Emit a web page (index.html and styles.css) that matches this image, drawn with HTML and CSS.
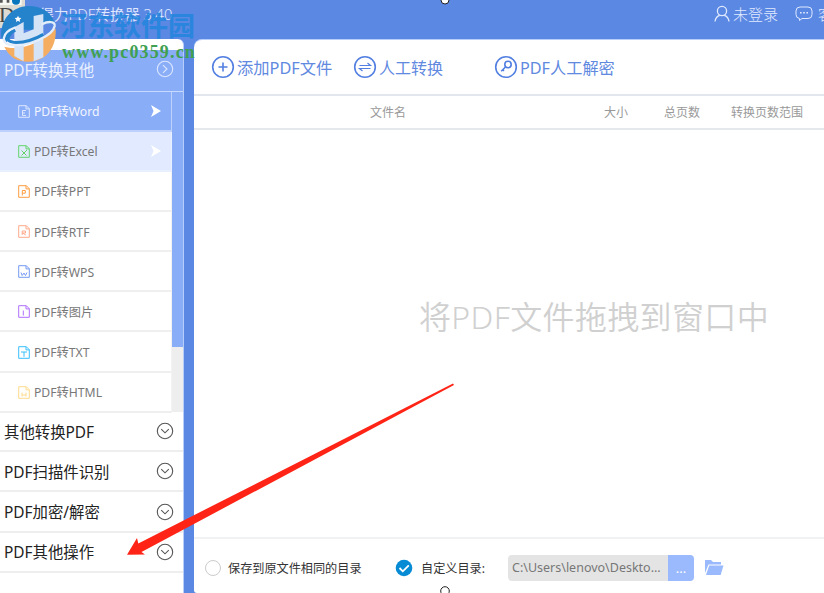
FILE: index.html
```html
<!DOCTYPE html>
<html lang="zh-CN">

	<head>
		<meta charset="UTF-8" />
		<meta name="viewport" content="width=device-width, initial-scale=1" />
		<title>得力PDF转换器 3.40</title>
		<link rel="stylesheet" href="styles.css">
	</head>
	<body>
		<!-- shared shapes -->
		<svg class="defs" width="0" height="0">
			<symbol id="down" viewBox="0 0 18 18">
				<circle cx="9" cy="9" r="7.7" />
				<path d="M5.2 7.2 9 10.8l3.8-3.6" />
			</symbol>
			<symbol id="file" viewBox="0 0 12 13">
				<path d="M.7.7h7.6l3 3v8.6H.7zM8 .7v3.2h3.3" />
			</symbol>
		</svg>
		<header class="titlebar">
			<h1 class="title">得力PDF转换器 3.40</h1>
			<div class="account">
				<svg class="icon-user" width="16" height="18" viewBox="0 0 16 18"><circle cx="8" cy="6" r="4.6" /><path d="M1 16.5c.5-3.8 2.5-5.6 4.8-6.2M15 16.5c-.5-3.8-2.5-5.6-4.8-6.2" /></svg>
				<span class="login">未登录</span>
				<svg class="icon-chat" width="18" height="16" viewBox="0 0 18 16"><path d="M5 1h8a4 4 0 0 1 4 4v3.5a4 4 0 0 1-4 4H7l-2.5 2v-2A4 4 0 0 1 1 8.5V5a4 4 0 0 1 4-4z" /><path class="dots" d="M5 6.8h1.6M8.2 6.8h1.6M11.4 6.8H13" /></svg>
				<span class="service">客</span>
			</div>
		</header>
		<div class="window">
			<aside class="sidebar">
				<div class="group group-open">
					<span>PDF转换其他</span>
					<svg class="arrow" width="18" height="18" viewBox="0 0 18 18"><circle cx="9" cy="9" r="7.7" /><path d="M7 5.2 11 9l-4 3.8" /></svg>
				</div>
				<div class="list">
					<ul class="items">
						<li class="item active"><svg class="file word" viewBox="0 0 12 13"><use href="#file" /><path d="M8 5.5H4.5v5H8M4.5 8H7" /></svg>PDF转Word<svg class="pointer" viewBox="0 0 10 12"><path d="M0 0 10 6 0 12 2.5 6z" /></svg></li>
						<li class="item hover"><svg class="file excel" viewBox="0 0 12 13"><use href="#file" /><path d="m3.5 5.5 5 5M9 5l-5.5 5.5" /></svg>PDF转Excel<svg class="pointer" viewBox="0 0 10 12"><path d="M0 0 10 6 0 12 2.5 6z" /></svg></li>
						<li class="item"><svg class="file ppt" viewBox="0 0 12 13"><use href="#file" /><path d="M4.3 10.5v-5h3v2.7h-3" /></svg>PDF转PPT</li>
						<li class="item"><svg class="file rtf" viewBox="0 0 12 13"><use href="#file" /><path d="M4.2 10V6h3.3v2H4.5l3.3 2" /></svg>PDF转RTF</li>
						<li class="item"><svg class="file wps" viewBox="0 0 12 13"><use href="#file" /><path d="m3 7.5 1.2 3L6 8l1.5 2.5L9 7.5" /></svg>PDF转WPS</li>
						<li class="item"><svg class="file image" viewBox="0 0 12 13"><use href="#file" /><path d="M5.3 5.5v5" /></svg>PDF转图片</li>
						<li class="item"><svg class="file txt" viewBox="0 0 12 13"><use href="#file" /><path d="M3 6h6M6 6v4.8" /></svg>PDF转TXT</li>
						<li class="item"><svg class="file html" viewBox="0 0 12 13"><use href="#file" /><path d="M4 6.5v4M8 6.5v4M4 9h4" /></svg>PDF转HTML</li>
					</ul>
					<div class="scroll"><div class="thumb"></div></div>
				</div>
				<div class="group"><span>其他转换PDF</span><svg class="arrow" width="18" height="18"><use href="#down" /></svg></div>
				<div class="group"><span>PDF扫描件识别</span><svg class="arrow" width="18" height="18"><use href="#down" /></svg></div>
				<div class="group"><span>PDF加密/解密</span><svg class="arrow" width="18" height="18"><use href="#down" /></svg></div>
				<div class="group"><span>PDF其他操作</span><svg class="arrow" width="18" height="18"><use href="#down" /></svg></div>
			</aside>
			<main class="main">
				<div class="toolbar">
					<button class="tool add"><svg width="24" height="24" viewBox="0 0 24 24"><circle cx="12" cy="12" r="10.3" /><path d="M12 7.5v9M7.5 12h9" /></svg>添加PDF文件</button>
					<button class="tool manual"><svg width="24" height="24" viewBox="0 0 24 24"><circle cx="12" cy="12" r="10.3" /><path class="thin" d="M6.5 10.5h11L14.5 8M17.5 13.5h-11l3 2.5" /></svg>人工转换</button>
					<button class="tool decrypt"><svg width="24" height="24" viewBox="0 0 24 24"><circle cx="12" cy="12" r="10.3" /><circle cx="14" cy="9.5" r="3.2" /><path d="m11.7 11.8-4.5 4.5M8.5 14.5l1.5 1.5" /></svg>PDF人工解密</button>
				</div>
				<div class="columns">
					<span class="col-name">文件名</span>
					<span class="col-size">大小</span>
					<span class="col-pages">总页数</span>
					<span class="col-range">转换页数范围</span>
				</div>
				<div class="dropzone"><span>将PDF文件拖拽到窗口中</span></div>
				<footer class="output">
					<span class="radio"></span>
					<span class="same">保存到原文件相同的目录</span>
					<svg class="checked" width="18" height="18" viewBox="0 0 18 18"><circle cx="9" cy="9" r="8.3" /><path d="m4.5 9 3.3 3.3 6-6" /></svg>
					<span class="custom">自定义目录:</span>
					<span class="path">C:\Users\lenovo\Deskto...</span>
					<button class="browse">...</button>
					<svg class="folder" width="20" height="17" viewBox="0 0 20 17"><path d="M1 14V1h6l2 2h8v2.5H4.5z" /><path d="M5.2 6.5h14.3L16.7 16H2z" /></svg>
				</footer>
			</main>
		</div>
		<div class="watermark">
			<svg class="mark" width="60" height="66" viewBox="0 0 180 198">
				<path fill="#dedbd3" d="M0 0h75v72q0 12-12 12H0z" />
				<path fill="#f7f7f4" d="M0 0h65v15H0z" />
				<path fill="#555" d="M0 0h8v8H0zM20 0h8v8h-8z" />
				<circle cx="48" cy="2" r="12" fill="#0876bd" />
				<text x="-3" y="66" class="letter">D</text>
				<path fill="#fff" d="M0 118h180v30H0z" />
				<path fill="#2583cc" d="M4 112C0 58 35 20 85 18c42 0 74 22 80 57-20-10-43-2-65 14H45L18 130z" />
				<path fill="#f5ad62" d="M167 85c4 58-29 100-82 100-33 0-58-14-72-45 28 8 62 5 96-13 30-16 48-30 58-42z" />
				<path fill="#d5e3f7" d="M43 82 71 66v34l30-12V48l29-6v130l-29 12v-67l-30 9v58l-28-16z" />
				<path fill="none" stroke="#e4edfa" stroke-width="7" d="M47 82C2 98 0 134 39 136c52 1 120-29 125-58 2-17-24-13-38-5" />
				<path fill="none" stroke="#2583cc" stroke-width="9" d="M46 91c-29 12-30 33-5 36 28 2 63-9 89-24" />
				<path fill="#fff" d="m54 47 3 6 7 1-5 5 1 7-6-4-6 4 1-7-5-5 7-1z" />
			</svg>
			<div class="site">
				<strong class="site-name">河东软件园</strong>
				<span class="site-url">www.pc0359.cn</span>
			</div>
		</div>
		<svg class="annotation" width="824" height="593" viewBox="0 0 824 593">
			<path fill="#ff2416" d="m453 383.5 1 1.5L141.500 552l3.500 2.500-18 .2 10-16.700 1.300 5.500z" />
			<circle cx="445" cy="0" r="4" />
			<circle cx="445" cy="591" r="4.3" />
		</svg>
	</body>
</html>
```
FILE: styles.css
```css
* {
	box-sizing: border-box;
}

body {
	margin: 0;
	width: 824px;
	height: 593px;
	overflow: hidden;
	position: relative;
	display: flex;
	flex-direction: column;
	background: #5b88e3;
	color: #333;
	font-family: "Noto Sans", "Noto Sans CJK SC", sans-serif;
	font-size: 12px;
	white-space: nowrap;
}

svg {
	fill: none;
	stroke: currentColor;
	flex: none;
}

button {
	border: 0;
	padding: 0;
	background: none;
	font: inherit;
	color: inherit;
}

.defs {
	position: absolute;
}

.titlebar {
	height: 39px;
	flex: none;
	display: flex;
	padding-left: 39px;
	color: #e0eaff;
}

.title {
	margin: 4px 0 0;
	font-size: 14.8px;
	font-weight: 350;
	line-height: 20px;
}

.account {
	margin-left: auto;
	width: 110px;
	display: flex;
	font-size: 15px;
	line-height: 20px;
	font-weight: 300;
}

.icon-user {
	margin-top: 5px;
	stroke-width: 1.3;
}

.login {
	width: 45px;
	margin: 4px 0 0 3px;
}

.icon-chat {
	margin: 6px 5px 0 17px;
}

.dots {
	stroke-width: 1.5;
}

.service {
	margin-top: 4px;
}

.window {
	flex: 1;
	display: flex;
	gap: 10px;
	min-height: 0;
}

.sidebar {
	width: 184px;
	padding-top: 11px;
	background: #fff;
	border-right: 1px solid #b7cdfa;
	border-radius: 0 6px 0 0;
}

.group {
	height: 40.2px;
	display: flex;
	align-items: center;
	justify-content: space-between;
	padding: 0 9px 0 4px;
	border-bottom: 2px solid #eee;
	color: #222;
	font-size: 15.4px;
}

.group-open {
	height: 41.6px;
	padding-bottom: 2px;
	background: #8aadf8;
	border-bottom: 1px solid #c8d9ff;
	color: #e9f0ff;
}

.arrow {
	stroke-width: 1.1;
	color: #555;
}

.group-open .arrow {
	color: #dce7ff;
}

.list {
	display: flex;
	height: 320.5px;
}

.items {
	width: 172px;
	margin: 0;
	padding: 0;
	list-style: none;
}

.item {
	height: 40.15px;
	display: flex;
	align-items: center;
	padding: 1px 10px 0 18px;
	border-bottom: 2px solid #efefef;
	border-right: 1px solid #f3f3f3;
	font-size: 12.2px;
	color: #777;
}

.item.active {
	background: #8aadf8;
	border-color: #bdd1fc;
	color: #f1f5ff;
}

.item.hover {
	background: #e1eafe;
	border-color: #e8effe;
}

.file {
	width: 12px;
	height: 13px;
	margin-right: 4px;
}

.word { color: #dce7ff; }
.excel { color: #62d46b; }
.ppt { color: #ff9d42; }
.rtf { color: #ffab8b; }
.wps { color: #759af1; }
.image { color: #af71ff; }
.txt { color: #39bfff; }
.html { color: #ffdb8c; }

.pointer {
	width: 10px;
	height: 12px;
	margin-left: auto;
	fill: #fff;
	stroke: none;
}

.scroll {
	flex: 1;
	background: #efeeef;
}

.thumb {
	height: 255px;
	background: #8aadf8;
}

.main {
	flex: 1;
	display: flex;
	flex-direction: column;
	background: #fff;
	border-top: 1px solid #b7cdfa;
	border-radius: 8px 0 0 3px;
}

.toolbar {
	height: 56px;
	display: flex;
	align-items: center;
	padding: 0 0 1px 17px;
	border-bottom: 2px solid #e2e7ed;
	color: #6089df;
	font-size: 16px;
}

.tool {
	display: flex;
	align-items: center;
	gap: 2px;
	text-align: left;
}

.tool svg {
	color: #527fe1;
	stroke-width: 1.6;
}

.tool .thin {
	stroke-width: 1.2;
}

.add {
	width: 142px;
	font-size: 16.3px;
}

.manual {
	width: 141px;
}

.decrypt {
	font-size: 16.2px;
}

.columns {
	height: 34px;
	display: flex;
	align-items: center;
	padding-bottom: 1px;
	border-bottom: 2px solid #e5e9ee;
	color: #999;
	font-size: 12px;
}

.col-name {
	width: 234px;
	margin-left: 176px;
}

.col-size {
	width: 60px;
}

.col-pages {
	width: 67px;
}

.dropzone {
	flex: 1;
	padding: 159px 0 0 225px;
	color: #d0d0d0;
	font-size: 32px;
	font-weight: 350;
	line-height: 56px;
	letter-spacing: .35px;
}

.output {
	height: 56px;
	display: flex;
	align-items: center;
	padding: 3px 0 0 11px;
	border-top: 2px solid #f1f2f4;
	font-size: 12.15px;
}

.radio {
	width: 16px;
	height: 16px;
	border: 1px solid #ccc;
	border-radius: 50%;
}

.same {
	width: 167px;
	margin-left: 7px;
}

.checked {
	fill: #078bd5;
	stroke: none;
}

.checked path {
	fill: none;
	stroke: #fff;
	stroke-width: 1.8;
}

.custom {
	width: 87px;
	margin-left: 8px;
}

.path,
.browse {
	height: 26px;
	line-height: 26px;
}

.path {
	width: 160px;
	padding-left: 4px;
	background: #e4e4e4;
	border-radius: 4px 0 0 4px;
	color: #777;
	font-size: 12.5px;
}

.browse {
	width: 26px;
	background: #9bbafd;
	border-radius: 0 4px 4px 0;
	color: #fff;
	font-size: 13px;
}

.folder {
	margin-left: 10px;
	fill: #9bbafd;
	stroke: none;
}

/* site stamp lying over the window corner */
.watermark {
	position: absolute;
	left: 0;
	top: 0;
	display: flex;
}

.mark {
	stroke: none;
}

.letter {
	fill: #454545;
	font-family: "Liberation Serif", serif;
	font-size: 64px;
}

.site {
	display: flex;
	flex-direction: column;
	padding-top: 9px;
}

.site-name {
	color: #2185dc;
	font-family: "Noto Sans CJK SC", sans-serif;
	font-size: 27px;
	line-height: 32px;
	opacity: .85;
}

.site-url {
	margin-left: 2px;
	color: #3fa052;
	font-family: "Liberation Serif", serif;
	font-size: 18px;
	font-weight: bold;
	line-height: 22px;
	letter-spacing: 1.15px;
}

.annotation {
	position: absolute;
	left: 0;
	top: 0;
	stroke: none;
	pointer-events: none;
}

.annotation circle {
	fill: #fff;
	stroke: #222;
}
```
